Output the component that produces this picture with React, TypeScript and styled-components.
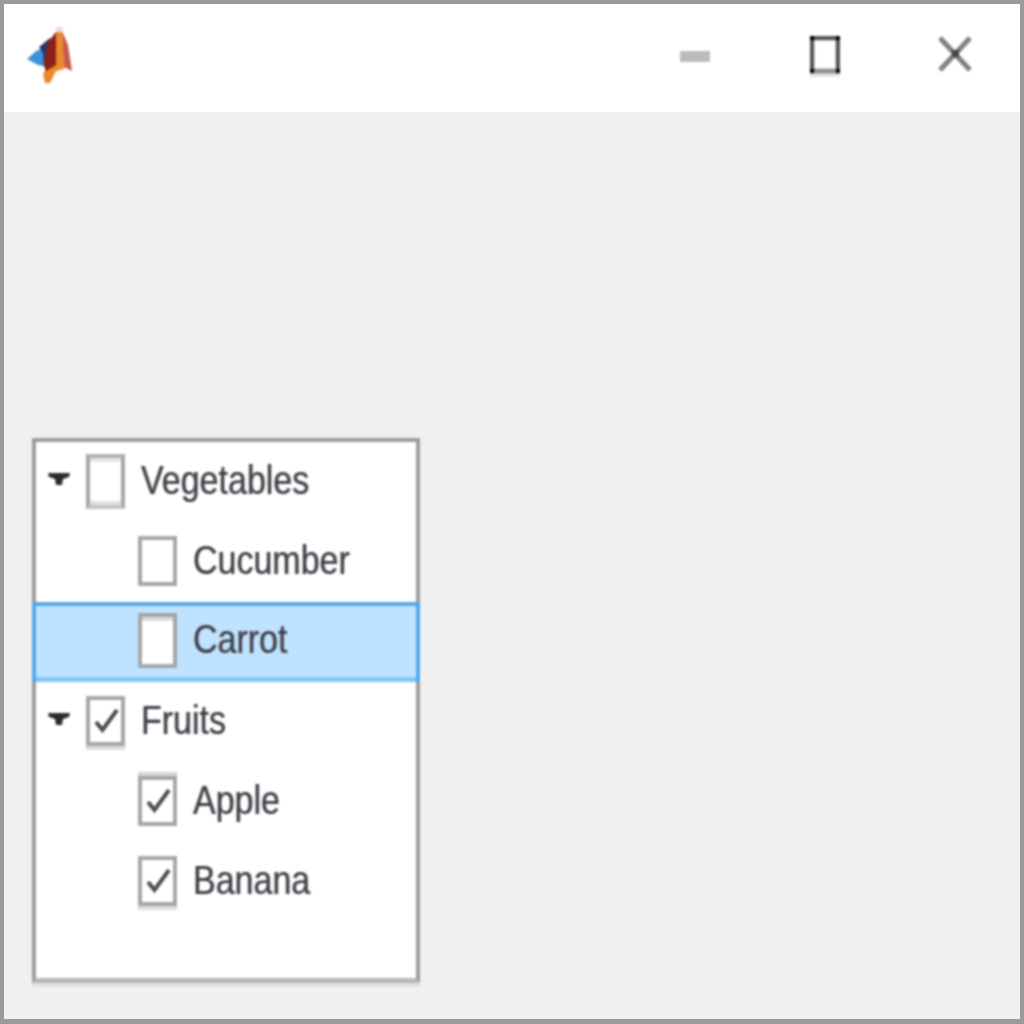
import React from 'react';
import styled, { createGlobalStyle } from 'styled-components';

const Global = createGlobalStyle`
  html, body { margin: 0; padding: 0; background: #f0f0f0; }
  * { box-sizing: border-box; }
`;

const Window = styled.div`
  width: 1024px;
  height: 1024px;
  display: flex;
  flex-direction: column;
  border: 4px solid #9a9a9a;
  border-bottom-width: 5px;
  background: #fff;
  font-family: "Liberation Sans", Arial, sans-serif;
  overflow: hidden;
`;

const TitleBar = styled.header`
  height: 108px;
  flex: none;
  display: flex;
  align-items: center;
  background: #fff;
  padding-left: 22px;
`;

const AppLogo = styled.svg`
  width: 48px;
  height: 56px;
  flex: none;
  margin-top: -6px;
  filter: blur(1px);
`;

const Controls = styled.div`
  display: flex;
  margin-left: auto;
  filter: blur(0.9px);
`;

const ControlButton = styled.button`
  width: 130px;
  height: 100px;
  margin-top: -8px;
  padding: 0;
  border: 0;
  background: none;
  display: flex;
  align-items: center;
  justify-content: center;
`;

const MinimizeIcon = styled.svg`
  width: 30px;
  height: 12px;
  margin-top: 6px;
`;

const MaximizeIcon = styled.svg`
  width: 30px;
  height: 42px;
  margin-top: 6px;
`;

const CloseIcon = styled.svg`
  width: 34px;
  height: 36px;
`;

const Body = styled.main`
  flex: 1;
  display: flex;
  align-items: flex-end;
  background: #f0f0f0;
  padding: 0 0 36px 28px;
`;

const Tree = styled.ul`
  width: 388px;
  height: 545px;
  margin: 0;
  padding: 0;
  list-style: none;
  background: #fff;
  border: solid #9c9c9c;
  border-width: 4px 4px 5px 4px;
  border-bottom-color: #b8b8b8;
  box-shadow: 0 4px 0 #e0e0e0;
  filter: blur(1px);
`;

const Row = styled.li<{ $level: number; $selected?: boolean }>`
  height: 80px;
  display: flex;
  align-items: center;
  padding-left: ${p => 12 + p.$level * 52}px;
  margin-top: 0;
  &:first-child { margin-top: -1px; }
  ${p => p.$selected && `
    background: #bfe3fe;
    box-shadow: inset 0 4px 0 #52a8ec, inset 4px 0 0 #52a8ec, inset -4px 0 0 #52a8ec, inset 0 -5px 0 #84c6f6;
    width: calc(100% + 8px);
    margin: 1px -4px -1px -4px;
    padding-left: ${16 + p.$level * 52}px;
    padding-bottom: 4px;
  `}
`;

const Toggle = styled.span<{ $hidden?: boolean }>`
  width: 38px;
  flex: none;
  display: flex;
  visibility: ${p => (p.$hidden ? 'hidden' : 'visible')};
`;

const Caret = styled.svg`
  width: 22px;
  height: 14px;
  margin-top: -2px;
`;

type BoxStyle = {
  $tall?: boolean;
  $top?: string;
  $bottom?: string;
  $innerTop?: string;
  $innerBottom?: string;
  $above?: string;
  $below?: string;
};

const Box = styled.span<BoxStyle>`
  width: 39px;
  height: ${p => (p.$tall ? 55 : 50)}px;
  flex: none;
  display: flex;
  align-items: center;
  justify-content: center;
  background: #fff;
  border: 4px solid #a6a6a6;
  border-top-color: ${p => p.$top ?? '#a6a6a6'};
  border-bottom-color: ${p => p.$bottom ?? '#a6a6a6'};
  box-shadow:
    inset 0 4px 0 ${p => p.$innerTop ?? 'transparent'},
    inset 0 -4px 0 ${p => p.$innerBottom ?? 'transparent'},
    0 -4px 0 ${p => p.$above ?? 'transparent'},
    0 4px 0 ${p => p.$below ?? 'transparent'};
`;

const Label = styled.span`
  margin-left: 16px;
  margin-bottom: 5px;
  font-size: 34px;
  line-height: 40px;
  color: #3e3e46;
  transform: scaleY(1.22);
  transform-origin: center;
  white-space: nowrap;
  text-shadow: 0.8px 0 0 rgba(70, 120, 180, 0.4), -0.8px 0 0 rgba(180, 120, 60, 0.4);
`;

const Check = () => (
  <svg width="26" height="28" viewBox="0 0 26 28">
    <path d="M3 15 L9.5 23 L24 3" fill="none" stroke="#4c4c4c" strokeWidth="4" />
  </svg>
);

type Item = BoxStyle & { label: string; level: number; toggle?: boolean; selected?: boolean; checked?: boolean };

const items: Item[] = [
  { label: 'Vegetables', level: 0, toggle: true, $tall: true, $top: '#b4b4b4', $bottom: '#c4c4c4', $innerTop: '#e4e4e4', $innerBottom: '#e0e0e0' },
  { label: 'Cucumber', level: 1 },
  { label: 'Carrot', level: 1, selected: true, $tall: true, $innerTop: '#dcdcdc' },
  { label: 'Fruits', level: 0, toggle: true, checked: true, $below: '#dcdcdc' },
  { label: 'Apple', level: 1, checked: true, $above: '#d4d4d4' },
  { label: 'Banana', level: 1, checked: true, $below: '#dedede' },
];

export default function App() {
  return (
    <>
      <Global />
      <Window>
        <TitleBar>
          <AppLogo viewBox="0 0 48 56" aria-label="MATLAB">
            <polygon points="1,32 10,24 20,20 24,40 12,38" fill="#3f90d8" />
            <polygon points="13,20 24,11 28,18 26,42 18,40 17,26" fill="#25386c" />
            <polygon points="22,15 30,5 33,42 20,48 18,36" fill="#8e2018" />
            <polygon points="30,5 36,4 38,42 30,44 24,56 19,56 17,46 30,38" fill="#ea8a2a" />
            <polygon points="36,4 42,18 46,44 38,40" fill="#c65a44" />
            <polygon points="30,0 37,0 37,5 30,5" fill="#eedcd5" />
          </AppLogo>
          <Controls>
            <ControlButton aria-label="Minimize">
              <MinimizeIcon viewBox="0 0 30 12">
                <rect width="30" height="11" fill="#bcbcbc" />
              </MinimizeIcon>
            </ControlButton>
            <ControlButton aria-label="Maximize">
              <MaximizeIcon viewBox="0 0 30 42">
                <rect x="0" y="36" width="30" height="5" fill="#e4e4e4" />
                <rect x="2" y="2" width="26" height="33" fill="none" stroke="#555" strokeWidth="4.5" />
                <rect x="2" y="33" width="26" height="4" fill="#8f8f8f" />
                <rect x="0" y="0" width="4" height="4" fill="#000" />
                <rect x="26" y="0" width="4" height="4" fill="#000" />
                <rect x="0" y="33" width="4" height="4" fill="#000" />
                <rect x="26" y="33" width="4" height="4" fill="#000" />
              </MaximizeIcon>
            </ControlButton>
            <ControlButton aria-label="Close">
              <CloseIcon viewBox="0 0 34 36">
                <path d="M2 2 L32 34 M32 2 L2 34" stroke="#808080" strokeWidth="5" fill="none" />
                <rect x="14" y="14" width="7" height="7" fill="#444" />
              </CloseIcon>
            </ControlButton>
          </Controls>
        </TitleBar>
        <Body>
          <Tree>
            {items.map(({ label, level, toggle, selected, checked, ...box }) => (
              <Row key={label} $level={level} $selected={selected}>
                <Toggle $hidden={!toggle}>
                  <Caret viewBox="0 0 22 14">
                    <polygon points="0,0 22,0 21,4 15,6 14,12 8,12 7,6 1,4" fill="#2c2c2c" />
                  </Caret>
                </Toggle>
                <Box {...box}>{checked && <Check />}</Box>
                <Label>{label}</Label>
              </Row>
            ))}
          </Tree>
        </Body>
      </Window>
    </>
  );
}
